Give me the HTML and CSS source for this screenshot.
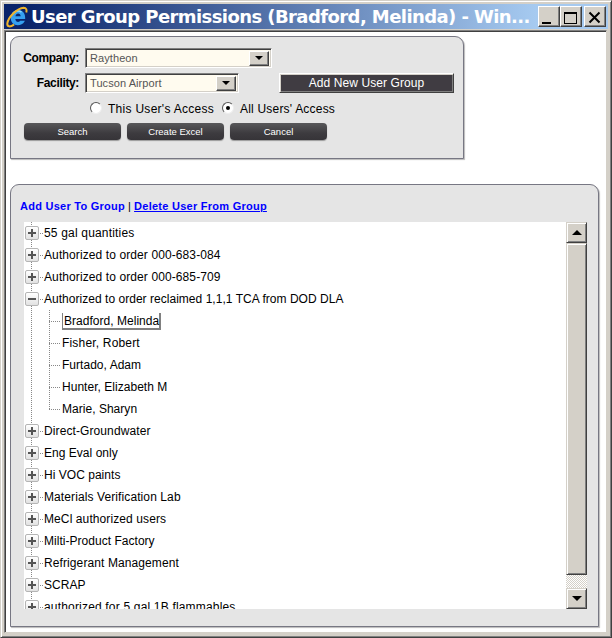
FILE: index.html
```html
<!DOCTYPE html>
<html lang="en">
<head>
<meta charset="utf-8">
<title>User Group Permissions</title>
<link rel="stylesheet" href="styles.css">
</head>
<body>
<div class="window">
  <header class="titlebar">
    <svg class="logo" width="22" height="22" viewBox="0 0 22 22">
      <path d="M18.500 15.500C17 18 14.600 19.200 11.800 19.200C7.400 19.200 4.800 16.200 4.800 12C4.800 7.400 8 4 12.300 4C16.800 4 19.500 7.500 19.200 13H9.300C9.600 15 10.600 15.900 12.100 15.900C13 15.900 13.800 15.400 14.200 14.700H18.900Z" fill="#35a0f0"/>
      <path d="M9.400 10.200H14.700C14.400 8.300 13.600 7.400 12.200 7.400C10.700 7.400 9.700 8.500 9.400 10.200Z" fill="#0a246a"/>
      <path d="M6.500 8C8 5.500 12 4 15.500 6" fill="none" stroke="#8ad8ff" stroke-width="1.500"/>
      <path d="M20.300 6.500C21 4 20.300 1.700 17.700 1.700C11 2 2 11.500 1.300 17.400C1 21.300 4.500 21 8 18.600" fill="none" stroke="#eeb42d" stroke-width="2"/>
    </svg>
    <h1 class="title">User Group Permissions (Bradford, Melinda) - Win...</h1>
    <div class="controls">
      <button class="ctl" aria-label="Minimize"><svg width="21" height="20" shape-rendering="crispEdges"><path d="M4 15h9v2H4z"/></svg></button>
      <button class="ctl" aria-label="Maximize"><svg width="21" height="20" shape-rendering="crispEdges"><path fill-rule="evenodd" d="M4 5h13v12H4zM5 7v9h11V7z"/></svg></button>
      <button class="ctl close" aria-label="Close"><svg width="21" height="20"><path d="M5.500 5.500L15.500 15.500M15.500 5.500L5.500 15.500" stroke="#000" stroke-width="2"/></svg></button>
    </div>
  </header>
  <main class="client">
    <section class="panel filters">
      <div class="field"><span class="label">Company:</span><div class="select wide"><span>Raytheon</span><i class="drop"></i></div></div>
      <div class="field second"><span class="label">Facility:</span><div class="select"><span>Tucson Airport</span><i class="drop"></i></div><button class="add">Add New User Group</button></div>
      <div class="radios"><i class="radio"></i><span class="own">This User's Access</span><i class="radio on"></i><span class="all">All Users' Access</span></div>
      <div class="actions"><button class="pill">Search</button><button class="pill">Create Excel</button><button class="pill">Cancel</button></div>
    </section>
    <section class="panel groups">
      <div class="links"><a>Add User To Group</a><span class="bar">|</span><a class="del">Delete User From Group</a></div>
      <div class="box">
        <ul class="tree">
          <li class="loose"><i class="tog"></i><span>55 gal quantities</span></li>
          <li class="airy"><i class="tog"></i><span>Authorized to order 000-683-084</span></li>
          <li class="airy"><i class="tog"></i><span>Authorized to order 000-685-709</span></li>
          <li><i class="tog open"></i><span>Authorized to order reclaimed 1,1,1 TCA from DOD DLA</span></li>
          <li class="leaf"><span class="picked">Bradford, Melinda</span></li>
          <li class="leaf loose"><span>Fisher, Robert</span></li>
          <li class="leaf"><span>Furtado, Adam</span></li>
          <li class="leaf"><span>Hunter, Elizabeth M</span></li>
          <li class="leaf last"><span>Marie, Sharyn</span></li>
          <li class="airy"><i class="tog"></i><span>Direct-Groundwater</span></li>
          <li><i class="tog"></i><span>Eng Eval only</span></li>
          <li><i class="tog"></i><span>Hi VOC paints</span></li>
          <li class="airy"><i class="tog"></i><span>Materials Verification Lab</span></li>
          <li class="airy"><i class="tog"></i><span>MeCl authorized users</span></li>
          <li><i class="tog"></i><span>Milti-Product Factory</span></li>
          <li class="airy"><i class="tog"></i><span>Refrigerant Management</span></li>
          <li><i class="tog"></i><span>SCRAP</span></li>
          <li class="loose"><i class="tog"></i><span>authorized for 5 gal 1B flammables</span></li>
        </ul>
        <div class="scroll"><i class="arrow up"></i><i class="thumb"></i><i class="track"></i><i class="arrow down"></i></div>
      </div>
    </section>
  </main>
</div>
</body>
</html>
```
FILE: styles.css
```css
* { box-sizing: border-box; }
body { margin: 0; font: 12px/14px "Liberation Sans", Arial, sans-serif; color: #000; }
button { font-family: inherit; padding: 0; }
.window {
  width: 612px; height: 638px; background: #d4d0c8; padding: 2px;
  border: solid; border-width: 1px; border-color: #d4d0c8 #404040 #404040 #d4d0c8;
  box-shadow: inset 1px 1px #fff, inset -1px -1px #808080;
  display: flex; flex-direction: column; overflow: hidden;
}
.titlebar {
  height: 25px; margin: 1px 0 0 1px; width: 604px; flex: none; display: flex; align-items: center;
  background: linear-gradient(90deg, #0a246a, #0a246a 4%, #a6caf0 88%);
}
.logo { margin-left: 2px; flex: none; }
.title { margin: 0 0 0 3px; width: 507px; flex: none; color: #fff; font: bold 18px/24px "DejaVu Sans", sans-serif; letter-spacing: -.58px; white-space: nowrap; }
.controls { display: flex; }
.ctl { width: 22px; height: 21px; background: #d4d0c8; border: 1px solid; border-color: #fff #404040 #404040 #fff; box-shadow: inset -1px -1px #808080; }
.ctl svg { display: block; margin: -1px; }
.close { margin-left: 2px; }
.client {
  flex: none; width: 603px; height: 603px; margin: 1px 0 0 1px; background: #fff; padding: 5px 0 0 5px;
  border: 1px solid; border-color: #808080 #d4d0c8 #d4d0c8 #808080;
  box-shadow: inset 1px 1px #404040;
}
.panel { background: #e5e5e5; border: 1px solid #777783; border-radius: 9px 9px 0 0; box-shadow: 1px 1px 1px #bbb; }
.filters { width: 454px; height: 123px; padding-top: 11px; }
.field { display: flex; height: 20px; align-items: center; }
.second { margin-top: 5px; }
.label { width: 68px; margin-right: 6px; text-align: right; font-weight: bold; letter-spacing: -.35px; white-space: nowrap; }
.select {
  width: 154px; height: 20px; display: flex; align-items: center; justify-content: space-between; background: #fffbef; color: #555;
  border: 1px solid; border-color: #808080 #fff #fff #808080; box-shadow: inset 1px 1px #404040, inset -1px -1px #d4d0c8; padding: 2px 2px 2px 4px;
  font-size: 11px; letter-spacing: .08px;
}
.wide { width: 187px; }
.drop { width: 20px; height: 15px; background: #d4d0c8; border: 1px solid; border-color: #fff #404040 #404040 #fff; box-shadow: inset -1px -1px #808080; display: grid; place-items: center; }
.drop::after { content: ""; border: solid transparent; border-width: 4px 4px 0; border-top-color: #000; }
.add { margin-left: 40px; width: 175px; height: 20px; background: #403c42; border: 1px solid; border-color: #fff #404040 #404040 #fff; box-shadow: inset 1px 1px #d4d0c8, inset -1px -1px #808080; color: #fff; font-size: 12px; letter-spacing: .08px; }
.radios { height: 14px; margin-top: 9px; padding-left: 79px; display: flex; align-items: center; white-space: nowrap; }
.radio { width: 12px; height: 12px; border-radius: 50%; background: #fff; border: 1px solid; border-color: #555 #eee #eee #555; display: grid; place-items: center; margin-top: -3px; flex: none; }
.on::after { content: ""; width: 4px; height: 4px; border-radius: 2px; background: #000; }
.own { width: 108px; margin-left: 6px; letter-spacing: .28px; }
.own + .radio { margin-left: 6px; }
.all { margin-left: 6px; letter-spacing: .2px; }
.actions { display: flex; gap: 6px; margin: 7px 0 0 13px; }
.pill { width: 97px; height: 17px; border: 0; border-radius: 4px; background: linear-gradient(#58585a, #3d3b3f 60%, #363438); box-shadow: 0 1px 1px #999; color: #fff; font-size: 9.5px; line-height: 15px; padding-bottom: 1px; }
.groups { width: 589px; height: 443px; margin-top: 25px; padding: 14px 0 0 9px; }
.links { display: flex; height: 14px; font-size: 11px; font-weight: bold; letter-spacing: .26px; white-space: nowrap; color: #00f; }
.bar { width: 9px; text-align: center; color: #000; font-weight: normal; }
.del { text-decoration: underline; }
.box { width: 563px; height: 387px; margin: 9px 0 0 4px; background: #fff; display: flex; overflow: hidden; }
.tree { list-style: none; margin: 0; padding: 0; width: 542px; height: 387px; overflow: hidden; background: repeating-linear-gradient(#888 0 1px, transparent 1px 2px) 7px 0 / 1px 100% no-repeat; }
.tree li { height: 22px; padding-top: 4px; display: flex; align-items: flex-start; white-space: nowrap; letter-spacing: .03px; }
.tree .airy { letter-spacing: .1px; }
.tree .loose { letter-spacing: .18px; }
.tog { width: 14px; height: 14px; flex: none; margin: 0 0 0 1px; border: 1px solid #b5b5b5; border-radius: 2px; background: linear-gradient(#555, #555) center / 8px 2px no-repeat, linear-gradient(#555, #555) center / 2px 8px no-repeat, linear-gradient(#fff, #e2e2e2); }
.open { background: linear-gradient(#555, #555) center / 8px 2px no-repeat, linear-gradient(#fff, #e2e2e2); }
.tog + span { padding-left: 5px; background: repeating-linear-gradient(90deg, transparent 0 1px, #888 1px 2px) 0 7px / 4px 1px no-repeat; }
.leaf { margin-left: 25px; background: repeating-linear-gradient(#888 0 1px, transparent 1px 2px) 0 0 / 1px 100% no-repeat, repeating-linear-gradient(90deg, #888 0 1px, transparent 1px 2px) 0 11px / 11px 1px no-repeat; }
.last { background-size: 1px 11px, 11px 1px; }
.leaf span { padding-left: 13px; }
.leaf .picked { margin: -1px 0 0 13px; height: 17px; padding: 1px 0 0 1px; border: solid #808080; border-width: 0 2px 2px 1px; }
.scroll { width: 21px; display: flex; flex-direction: column; background: repeating-conic-gradient(#fff 0 25%, #d4d0c8 0 50%) 0 0 / 2px 2px; }
.arrow, .thumb { background: #d4d0c8; border: 1px solid; border-color: #d4d0c8 #404040 #404040 #d4d0c8; box-shadow: inset 1px 1px #fff, inset -1px -1px #808080; }
.arrow { height: 21px; flex: none; display: grid; place-items: center; }
.arrow::after { content: ""; border: solid transparent; }
.up::after { border-width: 0 5px 5px; border-bottom-color: #000; }
.down::after { border-width: 5px 5px 0; border-top-color: #000; }
.thumb { height: 332px; flex: none; }
.track { flex: 1; }
```
